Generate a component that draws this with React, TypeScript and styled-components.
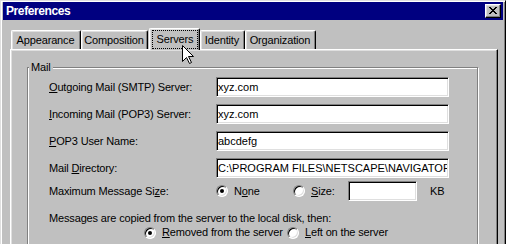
import React from "react";
import styled, { createGlobalStyle } from "styled-components";

const GlobalStyle = createGlobalStyle`
  html, body {
    margin: 0;
    padding: 0;
    background: #c0c0c0;
  }
  body {
    font-family: "Liberation Sans", Arial, sans-serif;
    font-size: 11px;
    color: #000;
  }
`;

const Window = styled.div`
  position: relative;
  box-sizing: border-box;
  width: 506px;
  height: 244px;
  overflow: hidden;
  background: #c0c0c0;
  border-left: 1px solid #dfdfdf;
  border-top: 1px solid #dfdfdf;
  border-right: 1px solid #000;
  box-shadow: inset 1px 1px 0 #fff, inset -1px 0 0 #808080;
  padding: 1px 2px 0 2px;
  display: flex;
  flex-direction: column;
`;

const TitleBar = styled.div`
  height: 18px;
  flex: none;
  background: #000080;
  display: flex;
  align-items: center;
  justify-content: space-between;
  padding: 0 2px 0 3px;
`;

const Title = styled.span`
  color: #fff;
  font-weight: bold;
  font-size: 12px;
  letter-spacing: -0.4px;
  line-height: 14px;
`;

const CloseButton = styled.div`
  box-sizing: border-box;
  width: 16px;
  height: 14px;
  background: #c0c0c0;
  border-style: solid;
  border-width: 1px;
  border-color: #fff #000 #000 #fff;
  box-shadow: inset -1px -1px 0 #808080, inset 1px 1px 0 #dfdfdf;
  display: flex;
  align-items: center;
  justify-content: center;
  padding: 0 1px 1px 0;
`;

const Body = styled.div`
  flex: 1;
  display: flex;
  flex-direction: column;
  padding: 0 5px 0 7px;
  letter-spacing: -0.15px;
`;

const TabRow = styled.div`
  display: flex;
  align-items: flex-end;
  height: 21px;
  margin-top: 8px;
  padding-left: 1px;
  position: relative;
  z-index: 1;
`;

const Tab = styled.div<{ $w: number; $active?: boolean }>`
  box-sizing: border-box;
  width: ${(p) => p.$w}px;
  height: ${(p) => (p.$active ? 22 : 19)}px;
  margin-bottom: ${(p) => (p.$active ? -1 : 0)}px;
  margin-left: ${(p) => (p.$active ? 1 : 0)}px;
  background: #c0c0c0;
  border-top: 1px solid #fff;
  border-left: 1px solid #fff;
  border-right: 1px solid #000;
  border-radius: 2px 2px 0 0;
  box-shadow: inset -1px 0 0 #808080, inset 1px 1px 0 #dfdfdf;
  display: flex;
  padding: ${(p) => (p.$active ? "1px 1px 1px 2px" : "0 1px 0 0")};
  line-height: 13px;
`;

const TabText = styled.span<{ $focus?: boolean }>`
  flex: 1;
  display: flex;
  align-items: center;
  justify-content: center;
  border: 1px ${(p) => (p.$focus ? "dotted #000" : "solid transparent")};
  white-space: nowrap;
`;

const Panel = styled.div`
  flex: 1;
  background: #c0c0c0;
  border-top: 1px solid #fff;
  border-left: 1px solid #fff;
  border-right: 1px solid #000;
  box-shadow: inset -1px 0 0 #808080, inset 1px 1px 0 #dfdfdf;
  padding: 11px 19px 0 16px;
`;

const GroupBox = styled.fieldset`
  margin: 0;
  padding: 0;
  min-width: 0;
  border: 1px solid #808080;
  box-shadow: inset 1px 1px 0 #fff, 1px 1px 0 #fff;
`;

const Legend = styled.legend`
  margin-left: 1px;
  padding: 0 2px;
  line-height: 13px;
  background: #c0c0c0;
`;

const GroupContent = styled.div`
  display: flex;
  flex-direction: column;
  padding: 3px 0 40px 21px;
`;

const Row = styled.div<{ $mt?: number; $h?: number; $indent?: number }>`
  display: flex;
  align-items: center;
  height: ${(p) => p.$h ?? 20}px;
  margin-top: ${(p) => p.$mt ?? 0}px;
  padding-left: ${(p) => p.$indent ?? 0}px;
  line-height: 13px;
  white-space: nowrap;
`;

const Label = styled.span`
  flex: none;
  width: 167px;
`;

const U = styled.span`
  text-decoration: underline;
  text-underline-offset: 1px;
`;

const Field = styled.input.attrs({ readOnly: true, type: "text" })<{ $w: number }>`
  box-sizing: border-box;
  flex: none;
  width: ${(p) => p.$w}px;
  height: 20px;
  margin: 0;
  padding: 0 1px;
  border-style: solid;
  border-width: 1px;
  border-color: #808080 #fff #fff #808080;
  box-shadow: inset 1px 1px 0 #000, inset -1px -1px 0 #dfdfdf;
  background: #fff;
  font-family: "Liberation Sans", Arial, sans-serif;
  font-size: 11px;
  color: #000;
  outline: none;
`;

const Option = styled.label<{ $w?: number }>`
  flex: none;
  display: flex;
  align-items: center;
  gap: 6px;
  width: ${(p) => (p.$w ? `${p.$w}px` : "auto")};
`;

const Radio = styled.span<{ $checked?: boolean }>`
  position: relative;
  box-sizing: border-box;
  flex: none;
  width: 12px;
  height: 12px;
  border-radius: 50%;
  border: 1px solid;
  border-color: #808080 #fff #fff #808080;
  box-shadow: inset 1px 1px 0 #000, inset -1px -1px 0 #dfdfdf;
  background: #fff;

  &::after {
    content: "";
    display: ${(p) => (p.$checked ? "block" : "none")};
    position: absolute;
    left: 3px;
    top: 3px;
    width: 4px;
    height: 4px;
    border-radius: 50%;
    background: #000;
  }
`;

const Unit = styled.span`
  margin-left: 13px;
`;

const Cursor = styled.svg`
  position: absolute;
  left: 181px;
  top: 44px;
  z-index: 5;
`;

const CloseGlyph = () => (
  <svg width="8" height="7" viewBox="0 0 8 7" shapeRendering="crispEdges">
    <g fill="#000">
      <rect x="0" y="0" width="2" height="1" />
      <rect x="6" y="0" width="2" height="1" />
      <rect x="1" y="1" width="2" height="1" />
      <rect x="5" y="1" width="2" height="1" />
      <rect x="2" y="2" width="4" height="1" />
      <rect x="3" y="3" width="2" height="1" />
      <rect x="2" y="4" width="4" height="1" />
      <rect x="1" y="5" width="2" height="1" />
      <rect x="5" y="5" width="2" height="1" />
      <rect x="0" y="6" width="2" height="1" />
      <rect x="6" y="6" width="2" height="1" />
    </g>
  </svg>
);

const tabs = [
  { name: "Appearance", w: 70 },
  { name: "Composition", w: 67 },
  { name: "Servers", w: 51, active: true },
  { name: "Identity", w: 45 },
  { name: "Organization", w: 71 },
];

export default function App() {
  return (
    <>
      <GlobalStyle />
      <Window>
        <TitleBar>
          <Title>Preferences</Title>
          <CloseButton>
            <CloseGlyph />
          </CloseButton>
        </TitleBar>
        <Body>
          <TabRow>
            {tabs.map((t) => (
              <Tab key={t.name} $w={t.w} $active={t.active}>
                <TabText $focus={t.active}>{t.name}</TabText>
              </Tab>
            ))}
          </TabRow>
          <Panel>
            <GroupBox>
              <Legend>Mail</Legend>
              <GroupContent>
                <Row>
                  <Label>
                    <U>O</U>utgoing Mail (SMTP) Server:
                  </Label>
                  <Field $w={233} value="xyz.com" />
                </Row>
                <Row $mt={7}>
                  <Label>
                    <U>I</U>ncoming Mail (POP3) Server:
                  </Label>
                  <Field $w={233} value="xyz.com" />
                </Row>
                <Row $mt={7}>
                  <Label>
                    <U>P</U>OP3 User Name:
                  </Label>
                  <Field $w={233} value="abcdefg" />
                </Row>
                <Row $mt={7}>
                  <Label>
                    Mail <U>D</U>irectory:
                  </Label>
                  <Field $w={233} value="C:\PROGRAM FILES\NETSCAPE\NAVIGATOR\MAIL" />
                </Row>
                <Row $mt={3}>
                  <Label>
                    Maximum Message Si<U>z</U>e:
                  </Label>
                  <Option $w={77}>
                    <Radio $checked />
                    <span>
                      N<U>o</U>ne
                    </span>
                  </Option>
                  <Option $w={55}>
                    <Radio />
                    <span>
                      <U>S</U>ize:
                    </span>
                  </Option>
                  <Field $w={69} value="" />
                  <Unit>KB</Unit>
                </Row>
                <Row $mt={10} $h={14}>
                  Messages are copied from the server to the local disk, then:
                </Row>
                <Row $mt={1} $h={13} $indent={95}>
                  <Option $w={143}>
                    <Radio $checked />
                    <span>
                      <U>R</U>emoved from the server
                    </span>
                  </Option>
                  <Option>
                    <Radio />
                    <span>
                      <U>L</U>eft on the server
                    </span>
                  </Option>
                </Row>
              </GroupContent>
            </GroupBox>
          </Panel>
        </Body>
        <Cursor width="13" height="20" viewBox="0 0 13 20">
          <path
            d="M0.5 0.5 V16.5 L4.5 12.5 L7.5 18.5 L9.5 17.5 L6.5 11.5 H11.5 Z"
            fill="#fff"
            stroke="#000"
            strokeWidth="1"
            strokeLinejoin="miter"
          />
        </Cursor>
      </Window>
    </>
  );
}
